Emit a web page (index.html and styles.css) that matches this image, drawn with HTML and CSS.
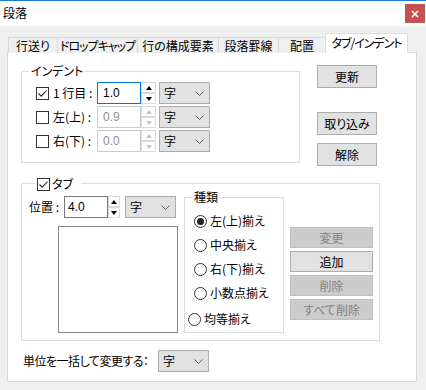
FILE: index.html
```html
<!DOCTYPE html>
<html lang="ja">

<head>
  <meta charset="UTF-8">
  <title>段落</title>
  <link rel="stylesheet" href="styles.css">
</head>

<body>
  <div class="titlebar">
    <span class="title">段落</span>
    <span class="close">
      <svg width="8" height="8" viewBox="0 0 8 8"><path d="M1 1 L7 7 M7 1 L1 7" stroke="#fff" stroke-width="1.6" /></svg>
    </span>
  </div>

  <div class="tabs">
    <div class="tab">行送り</div>
    <div class="tab kana">ドロップキャップ</div>
    <div class="tab">行の構成要素</div>
    <div class="tab">段落罫線</div>
    <div class="tab">配置</div>
    <div class="tab kana active">タブ/インデント</div>
  </div>

  <div class="panel">
    <div class="top">
      <div class="group indent">
        <span class="legend">インデント</span>
        <div class="row">
          <span class="check on"><svg width="11" height="11" viewBox="0 0 11 11"><path d="M1.5 5.5 L4.2 8.2 L9.5 2.5" fill="none" stroke="#222" stroke-width="1.1" /></svg></span>
          <span class="row-label">1 行目 :</span>
          <span class="input focus">1.0</span>
          <span class="spin"><span class="up"></span><span class="down"></span></span>
          <span class="select">字<svg width="9" height="5" viewBox="0 0 9 5"><path d="M0.5 0.5 L4.5 4.5 L8.5 0.5" fill="none" stroke="#606060" /></svg></span>
        </div>
        <div class="row">
          <span class="check"></span>
          <span class="row-label">左(上) :</span>
          <span class="input off">0.9</span>
          <span class="spin off"><span class="up"></span><span class="down"></span></span>
          <span class="select">字<svg width="9" height="5" viewBox="0 0 9 5"><path d="M0.5 0.5 L4.5 4.5 L8.5 0.5" fill="none" stroke="#606060" /></svg></span>
        </div>
        <div class="row">
          <span class="check"></span>
          <span class="row-label">右(下) :</span>
          <span class="input off">0.0</span>
          <span class="spin off"><span class="up"></span><span class="down"></span></span>
          <span class="select">字<svg width="9" height="5" viewBox="0 0 9 5"><path d="M0.5 0.5 L4.5 4.5 L8.5 0.5" fill="none" stroke="#606060" /></svg></span>
        </div>
      </div>
      <div class="side-buttons">
        <button class="button">更新</button>
        <button class="button import">取り込み</button>
        <button class="button">解除</button>
      </div>
    </div>

    <div class="group tabgroup">
      <span class="legend check-legend">
        <span class="check on"><svg width="11" height="11" viewBox="0 0 11 11"><path d="M1.5 5.5 L4.2 8.2 L9.5 2.5" fill="none" stroke="#222" stroke-width="1.1" /></svg></span>タブ
      </span>
      <div class="tab-left">
        <div class="pos-row">
          <span class="pos-label">位置 :</span>
          <span class="input pos">4.0</span>
          <span class="spin small"><span class="up"></span><span class="down"></span></span>
          <span class="select">字<svg width="9" height="5" viewBox="0 0 9 5"><path d="M0.5 0.5 L4.5 4.5 L8.5 0.5" fill="none" stroke="#606060" /></svg></span>
        </div>
        <div class="listbox"></div>
      </div>
      <div class="group kind">
        <span class="legend">種類</span>
        <div class="radio-row"><span class="radio on"></span>左(上)揃え</div>
        <div class="radio-row"><span class="radio"></span>中央揃え</div>
        <div class="radio-row"><span class="radio"></span>右(下)揃え</div>
        <div class="radio-row"><span class="radio"></span>小数点揃え</div>
        <div class="radio-row outdent"><span class="radio"></span>均等揃え</div>
      </div>
      <div class="tab-buttons">
        <button class="button wide" disabled>変更</button>
        <button class="button wide">追加</button>
        <button class="button wide" disabled>削除</button>
        <button class="button wide" disabled>すべて削除</button>
      </div>
    </div>

    <div class="bulk">
      <span class="bulk-label">単位を一括して変更する：</span>
      <span class="select">字<svg width="9" height="5" viewBox="0 0 9 5"><path d="M0.5 0.5 L4.5 4.5 L8.5 0.5" fill="none" stroke="#606060" /></svg></span>
    </div>
  </div>
</body>

</html>
```

FILE: styles.css
```css
* {
  box-sizing: border-box;
}

body {
  margin: 0;
  width: 426px;
  height: 390px;
  overflow: hidden;
  background-color: #f0f0f0;
  color: #000;
  font-family: "Noto Sans CJK JP", "Noto Sans", sans-serif;
  font-size: 12px;
  line-height: 16px;
  font-feature-settings: "palt";
}

/* window title */
.titlebar {
  height: 26px;
  background-color: #fff;
  border-top: 1px solid #1a7ad6;
  display: flex;
  align-items: flex-start;
  justify-content: space-between;
}

.title {
  padding-left: 3px;
  padding-top: 4px;
}

.close {
  width: 20px;
  height: 19px;
  margin-top: 3px;
  margin-right: 1px;
  background-color: #c75050;
  display: flex;
  align-items: center;
  justify-content: center;
}

/* tab strip */
.tabs {
  display: flex;
  align-items: flex-end;
  height: 27px;
  padding-left: 8px;
  padding-top: 8px;
  position: relative;
  z-index: 1;
  margin-bottom: -1px;
}

.tab {
  height: 16px;
  padding: 0;
  border: 1px solid #d9d9d9;
  border-bottom: none;
  margin-right: -1px;
  line-height: 15px;
  text-align: center;
  background-color: #f0f0f0;
  white-space: nowrap;
}

.tab:nth-child(1) { width: 50px; }
.tab:nth-child(2) { width: 81px; }
.tab:nth-child(3) { width: 82px; }
.tab:nth-child(4) { width: 61px; }
.tab:nth-child(5) { width: 48px; }

.tab.kana {
  letter-spacing: -1px;
}

.tab.active {
  width: 83px;
  height: 20px;
  padding-top: 1px;
  background-color: #fff;
}

.panel {
  margin: 0 9px 0 7px;
  height: 330px;
  background-color: #fff;
  border: 1px solid #d9d9d9;
}

/* group boxes */
.group {
  position: relative;
  border: 1px solid #dcdcdc;
}

.legend {
  position: absolute;
  top: -9px;
  left: 7px;
  padding: 0 2px;
  background-color: #fff;
  white-space: nowrap;
}

.top {
  display: flex;
  align-items: flex-start;
}

.indent {
  width: 279px;
  height: 92px;
  margin: 18px 0 0 13px;
  padding: 10px 0 0 14px;
}

.row {
  display: flex;
  align-items: center;
  height: 22px;
  margin-bottom: 2px;
}

.check {
  width: 13px;
  height: 13px;
  border: 1px solid #333;
  background-color: #fff;
  display: flex;
  align-items: center;
  justify-content: center;
  flex-shrink: 0;
}

.row-label {
  width: 48px;
  padding-left: 4px;
}

.input {
  width: 44px;
  height: 22px;
  border: 1px solid #7a7a7a;
  padding: 2px 0 0 5px;
  font-family: "Liberation Sans", Arial, sans-serif;
  font-size: 12px;
}

.input.focus {
  border-color: #0078d7;
}

.input.off {
  border-color: #ccc;
  color: #8d8d8d;
}

.spin {
  width: 15px;
  height: 22px;
  display: flex;
  flex-direction: column;
  margin-right: 3px;
}

.spin .up,
.spin .down {
  flex: 1;
  border: 1px solid #dadada;
  background-color: #fff;
  display: flex;
  align-items: center;
  justify-content: center;
}

.spin .up::after {
  content: "";
  border: 3px solid transparent;
  border-top: none;
  border-bottom: 4px solid #000;
}

.spin .down::after {
  content: "";
  border: 3px solid transparent;
  border-bottom: none;
  border-top: 4px solid #000;
}

.spin.off .up::after {
  border-bottom-color: #c4c4c4;
}

.spin.off .down::after {
  border-top-color: #c4c4c4;
}

.spin.small {
  width: 12px;
  margin-right: 5px;
}

.select {
  width: 51px;
  height: 22px;
  background-color: #e1e1e1;
  border: 1px solid #adadad;
  display: flex;
  align-items: center;
  justify-content: space-between;
  padding: 0 5px 0 4px;
}

.side-buttons {
  display: flex;
  flex-direction: column;
  margin: 12px 0 0 17px;
}

.button {
  width: 60px;
  height: 23px;
  padding: 0;
  background-color: #e1e1e1;
  border: 1px solid #adadad;
  font-family: inherit;
  font-size: 12px;
  color: #000;
  font-feature-settings: "palt";
}

.button.import {
  margin: 24px 0 8px;
}

.button:disabled {
  background-color: #ccc;
  border-color: #bfbfbf;
  color: #838383;
}

/* tab settings group */
.tabgroup {
  width: 359px;
  height: 158px;
  margin: 17px 0 0 13px;
  display: flex;
  align-items: flex-start;
}

.check-legend {
  display: flex;
  align-items: center;
  left: 14px;
  top: -8px;
  padding: 0 8px 0 1px;
}

.check-legend .check {
  margin-right: 2px;
}

.tab-left {
  padding: 12px 0 0 7px;
}

.pos-row {
  display: flex;
  align-items: center;
}

.pos-label {
  width: 35px;
}

.input.pos {
  width: 44px;
  border-color: #7a7a7a;
  padding-left: 3px;
}

.listbox {
  width: 120px;
  height: 107px;
  margin: 8px 0 0 29px;
  border: 1px solid #828790;
}

.kind {
  width: 100px;
  height: 136px;
  margin: 13px 0 0 6px;
  padding: 11px 0 0 9px;
}

.radio-row {
  display: flex;
  align-items: center;
  height: 24px;
}

.radio-row.outdent {
  margin-left: -6px;
  height: 26px;
  padding-top: 2px;
}

.radio {
  width: 13px;
  height: 13px;
  border: 1px solid #333;
  border-radius: 50%;
  margin-right: 3px;
  display: flex;
  align-items: center;
  justify-content: center;
}

.radio.on::after {
  content: "";
  width: 7px;
  height: 7px;
  border-radius: 50%;
  background-color: #222;
}

.tab-buttons {
  display: flex;
  flex-direction: column;
  gap: 3px;
  margin: 43px 0 0 6px;
}

.button.wide {
  width: 83px;
  height: 21px;
}

/* bottom row */
.bulk {
  display: flex;
  align-items: center;
  margin: 9px 0 0 15px;
}

.bulk-label {
  width: 135px;
  letter-spacing: -0.5px;
}
```
